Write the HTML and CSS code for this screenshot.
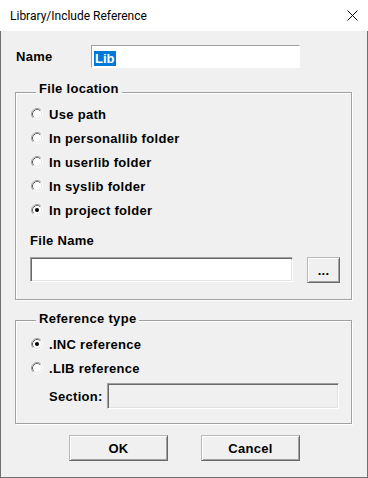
FILE: index.html
```html
<!DOCTYPE html>
<html lang="en">
<head>
  <meta charset="UTF-8">
  <title>Library/Include Reference</title>
  <link rel="stylesheet" href="styles.css">
</head>
<body>
  <svg class="defs" aria-hidden="true">
    <symbol id="radio" viewBox="0 0 12 12">
      <circle cx="6" cy="6" r="5" fill="#fff"/>
      <path d="M2.11 9.89A5.5 5.5 0 0 1 9.89 2.11" fill="none" stroke="#a0a0a0"/>
      <path d="M9.89 2.11A5.5 5.5 0 0 1 2.11 9.89" fill="none" stroke="#fff"/>
      <path d="M2.82 9.18A4.5 4.5 0 0 1 9.18 2.82" fill="none" stroke="#696969"/>
      <path d="M9.18 2.82A4.5 4.5 0 0 1 2.82 9.18" fill="none" stroke="#e3e3e3"/>
    </symbol>
  </svg>

  <div class="window">
    <div class="titlebar">
      <span class="title">Library/Include Reference</span>
      <svg class="close" viewBox="0 0 11 11"><path d="M0.5 0.5L10.5 10.5M10.5 0.5L0.5 10.5" stroke="#000" stroke-width="1"/></svg>
    </div>

    <div class="dialog">
      <div class="name-row">
        <div class="label name-label">Name</div>
        <div class="field name-field"><span class="sel">Lib</span></div>
      </div>

      <!-- File location -->
      <div class="group location-group">
        <div class="label group-title">File location</div>
        <div class="radios">
          <div class="radio-row"><svg class="radio" viewBox="0 0 12 12"><use href="#radio" width="12" height="12"/></svg><span class="label">Use path</span></div>
          <div class="radio-row"><svg class="radio" viewBox="0 0 12 12"><use href="#radio" width="12" height="12"/></svg><span class="label">In personallib folder</span></div>
          <div class="radio-row"><svg class="radio" viewBox="0 0 12 12"><use href="#radio" width="12" height="12"/></svg><span class="label">In userlib folder</span></div>
          <div class="radio-row"><svg class="radio" viewBox="0 0 12 12"><use href="#radio" width="12" height="12"/></svg><span class="label">In syslib folder</span></div>
          <div class="radio-row"><svg class="radio" viewBox="0 0 12 12"><use href="#radio" width="12" height="12"/><circle cx="6" cy="6" r="2"/></svg><span class="label">In project folder</span></div>
        </div>
        <div class="label file-label">File Name</div>
        <div class="file-row">
          <div class="field sunken file-field"></div>
          <div class="button label browse">...</div>
        </div>
      </div>

      <!-- Reference type -->
      <div class="group reference-group">
        <div class="label group-title">Reference type</div>
        <div class="radios">
          <div class="radio-row"><svg class="radio" viewBox="0 0 12 12"><use href="#radio" width="12" height="12"/><circle cx="6" cy="6" r="2"/></svg><span class="label">.INC reference</span></div>
          <div class="radio-row"><svg class="radio" viewBox="0 0 12 12"><use href="#radio" width="12" height="12"/></svg><span class="label">.LIB reference</span></div>
        </div>
        <div class="section-row">
          <div class="label section-label">Section:</div>
          <div class="field sunken section-field"></div>
        </div>
      </div>

      <div class="buttons">
        <div class="button label push">OK</div>
        <div class="button label push">Cancel</div>
      </div>
    </div>
  </div>
</body>
</html>
```

FILE: styles.css
```css
* {
  box-sizing: border-box;
}
body {
  margin: 0;
  background-color: #f0f0f0;
  font-family: "Liberation Sans", Arial, sans-serif;
  color: #000;
}
.defs {
  position: absolute;
  width: 0;
  height: 0;
  overflow: hidden;
}
.window {
  width: 368px;
  height: 478px;
  display: flex;
  flex-direction: column;
}
.titlebar {
  height: 31px;
  flex: none;
  background-color: #fff;
  display: flex;
  align-items: center;
  justify-content: space-between;
  padding: 0 10px;
}
.title {
  font-family: Roboto, "Liberation Sans", sans-serif;
  font-size: 12px;
  line-height: 14px;
}
.close {
  width: 11px;
  height: 11px;
}
.dialog {
  flex: 1;
  border: 1px solid #6f6f6f;
  border-top: none;
  padding: 14px 15px 0 14px;
}
.label {
  font-size: 13px;
  font-weight: bold;
  letter-spacing: 0.3px;
  line-height: 15px;
}
.name-row {
  display: flex;
  align-items: center;
  height: 23px;
}
.name-label {
  width: 76px;
  padding-left: 1px;
}
.field {
  background-color: #fff;
  border: 1px solid;
  border-color: #a0a0a0 #fff #fff #a0a0a0;
}
.field.sunken {
  border-color: #a0a0a0 #fff #fff #a0a0a0;
  box-shadow: inset 1px 1px 0 #696969, inset -1px -1px 0 #e3e3e3;
}
.name-field {
  width: 209px;
  height: 23px;
  padding: 3px 0 0 2px;
}
.sel {
  display: inline-block;
  background-color: #0078d7;
  color: #fff;
  font-size: 13px;
  font-weight: bold;
  line-height: 15px;
  padding: 0 1px;
}
.group {
  margin-top: 24px;
  border: 1px solid #a0a0a0;
  box-shadow: inset 1px 1px 0 #fff, 1px 1px 0 #fff;
  padding: 0 11px 16px 14px;
}
.group-title {
  width: fit-content;
  margin: -12px 0 0 6px;
  padding: 0 3px;
  background-color: #f0f0f0;
}
.radios {
  margin-top: 6px;
}
.radio-row {
  display: flex;
  align-items: center;
  gap: 6px;
  height: 24px;
  padding-left: 1px;
}
.radio {
  width: 12px;
  height: 12px;
  flex: none;
}
.file-label {
  margin-top: 11px;
}
.file-row {
  display: flex;
  align-items: flex-start;
  gap: 14px;
  margin-top: 9px;
}
.file-field {
  width: 263px;
  height: 25px;
}
.button {
  display: flex;
  align-items: center;
  justify-content: center;
  background-color: #f0f0f0;
  border: 1px solid;
  border-color: #b9b9b9 #696969 #696969 #b9b9b9;
  box-shadow: inset 1px 1px 0 #fff, inset -1px -1px 0 #a0a0a0;
}
.browse {
  width: 33px;
  height: 26px;
}
.reference-group {
  margin-top: 20px;
  padding-bottom: 14px;
}
.reference-group .group-title {
  margin-top: -10px;
}
.section-row {
  display: flex;
  align-items: center;
  margin: 3px 0 0 19px;
}
.section-label {
  width: 58px;
}
.section-field {
  width: 232px;
  height: 26px;
  background-color: #f0f0f0;
}
.buttons {
  display: flex;
  gap: 33px;
  margin-top: 11px;
  padding-left: 54px;
}
.push {
  width: 99px;
  height: 26px;
}
```
